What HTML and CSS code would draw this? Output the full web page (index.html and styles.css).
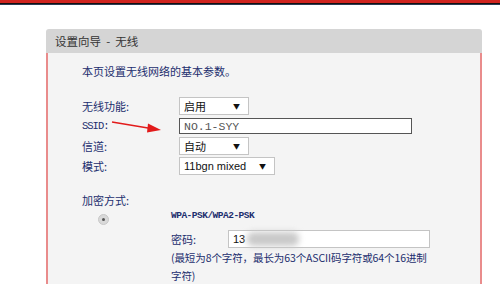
FILE: index.html
```html
<!DOCTYPE html>
<html lang="zh-CN">
<head>
  <meta charset="UTF-8">
  <title>设置向导 - 无线</title>
  <link rel="stylesheet" href="styles.css">
</head>
<body>

  <div class="topbar"></div>

  <div class="panel">
    <div class="panel-head">设置向导 &nbsp;- &nbsp;无线</div>
    <div class="panel-body">
      <p class="intro">本页设置无线网络的基本参数。</p>

      <div class="form">
        <div class="label">无线功能:</div>
        <div class="field">
          <div class="select"><span>启用</span><span class="caret">▼</span></div>
        </div>

        <div class="label mono">SSID:
          <svg class="arrow" width="52" height="14" viewBox="0 0 52 14">
            <line x1="1" y1="2" x2="40" y2="8.5" stroke="#e21b1b" stroke-width="1.6"/>
            <polygon points="50,10 37,3.5 36,12.5" fill="#e21b1b"/>
          </svg>
        </div>
        <div class="field">
          <div class="text-input ssid">NO.1-SYY</div>
        </div>

        <div class="label">信道:</div>
        <div class="field">
          <div class="select"><span>自动</span><span class="caret">▼</span></div>
        </div>

        <div class="label">模式:</div>
        <div class="field">
          <div class="select wide"><span class="latin">11bgn mixed</span><span class="caret">▼</span></div>
        </div>
      </div>

      <div class="enc-title">加密方式:</div>

      <div class="enc">
        <div class="radio-cell"><span class="radio"></span></div>
        <div class="enc-detail">
          <div class="enc-name">WPA-PSK/WPA2-PSK</div>
          <div class="pwd-row">
            <span class="pwd-label">密码:</span>
            <div class="text-input pwd"><span class="latin">13</span><span class="smudge"></span></div>
          </div>
          <p class="hint">(最短为8个字符，最长为63个ASCII码字符或64个16进制<br>字符)</p>
        </div>
      </div>
    </div>
  </div>

</body>
</html>
```

FILE: styles.css
```css
body {
  margin: 0;
  background-color: #ffffff;
  font-family: "Noto Sans CJK SC", "Liberation Sans", sans-serif;
  font-size: 11px;
  color: #1c2e6e;
  overflow: hidden;
}
.topbar {
  height: 1px;
  border-top: 3px solid #d0241f;
  border-bottom: 1px solid #2e3b55;
  background-color: #111111;
}
.panel {
  width: 436px;
  margin: 24px 0 0 46px;
}
.panel-head {
  height: 24px;
  line-height: 24px;
  padding-left: 9px;
  background-color: #d5d5d5;
  border-radius: 3px 3px 0 0;
  color: #333333;
  font-size: 11.5px;
}
.panel-body {
  height: 240px;
  background-color: #f4f4f4;
  border-left: 2px solid #e98c8c;
  border-right: 2px solid #e98c8c;
  padding: 10px 0 0 34px;
}
.intro {
  margin: 0;
  line-height: 16px;
}
.form {
  display: grid;
  grid-template-columns: 97px 1fr;
  grid-auto-rows: 20px;
  margin-top: 17px;
}
.label {
  display: flex;
  align-items: center;
  position: relative;
}
.mono {
  font-family: "Liberation Mono", monospace;
  font-size: 10.5px;
  letter-spacing: -1px;
}
.arrow {
  position: absolute;
  left: 29px;
  top: 4px;
}
.field {
  display: flex;
  align-items: center;
}
.select {
  border: 1px solid #c4c4c4;
  background-color: #ffffff;
  display: flex;
  align-items: center;
  justify-content: space-between;
  padding: 0 8px 0 4px;
  box-sizing: border-box;
  width: 70px;
  height: 18px;
  color: #111111;
}
.select.wide {
  width: 96px;
}
.caret {
  font-size: 7px;
  color: #111111;
}
.latin {
  font-family: "Liberation Sans", sans-serif;
  font-size: 11px;
}
.text-input {
  height: 16px;
  border: 1px solid #555555;
  background-color: #ffffff;
  box-sizing: border-box;
  display: flex;
  align-items: center;
  padding-left: 4px;
}
.ssid {
  width: 233px;
  font-family: "Liberation Mono", monospace;
  font-size: 11.5px;
  color: #555555;
}
.enc-title {
  margin-top: 16px;
  line-height: 16px;
}
.enc {
  display: flex;
  margin-top: 1px;
}
.radio-cell {
  width: 89px;
  padding: 5px 0 0 16px;
  box-sizing: border-box;
}
.radio {
  display: block;
  width: 9px;
  height: 9px;
  border-radius: 50%;
  background-color: #d9d9d9;
  border: 1px solid #c8c8c8;
  position: relative;
}
.radio::after {
  content: "";
  position: absolute;
  left: 3px;
  top: 3px;
  width: 3px;
  height: 3px;
  border-radius: 50%;
  background-color: #555555;
}
.enc-detail {
  width: 262px;
}
.enc-name {
  font-family: "Liberation Mono", monospace;
  font-size: 9.5px;
  letter-spacing: -0.5px;
  font-weight: bold;
  line-height: 14px;
}
.pwd-row {
  display: flex;
  align-items: center;
  height: 18px;
  margin-top: 7px;
}
.pwd-label {
  width: 57px;
}
.pwd {
  width: 202px;
  height: 18px;
  border-color: #c4c4c4;
  color: #111111;
}
.smudge {
  width: 52px;
  height: 14px;
  margin-left: 2px;
  background-color: #c9c9c9;
  border-radius: 6px;
  filter: blur(3px);
}
.hint {
  margin: 1px 0 0;
  line-height: 18px;
  font-size: 10.5px;
  letter-spacing: -0.1px;
  white-space: nowrap;
}
```
